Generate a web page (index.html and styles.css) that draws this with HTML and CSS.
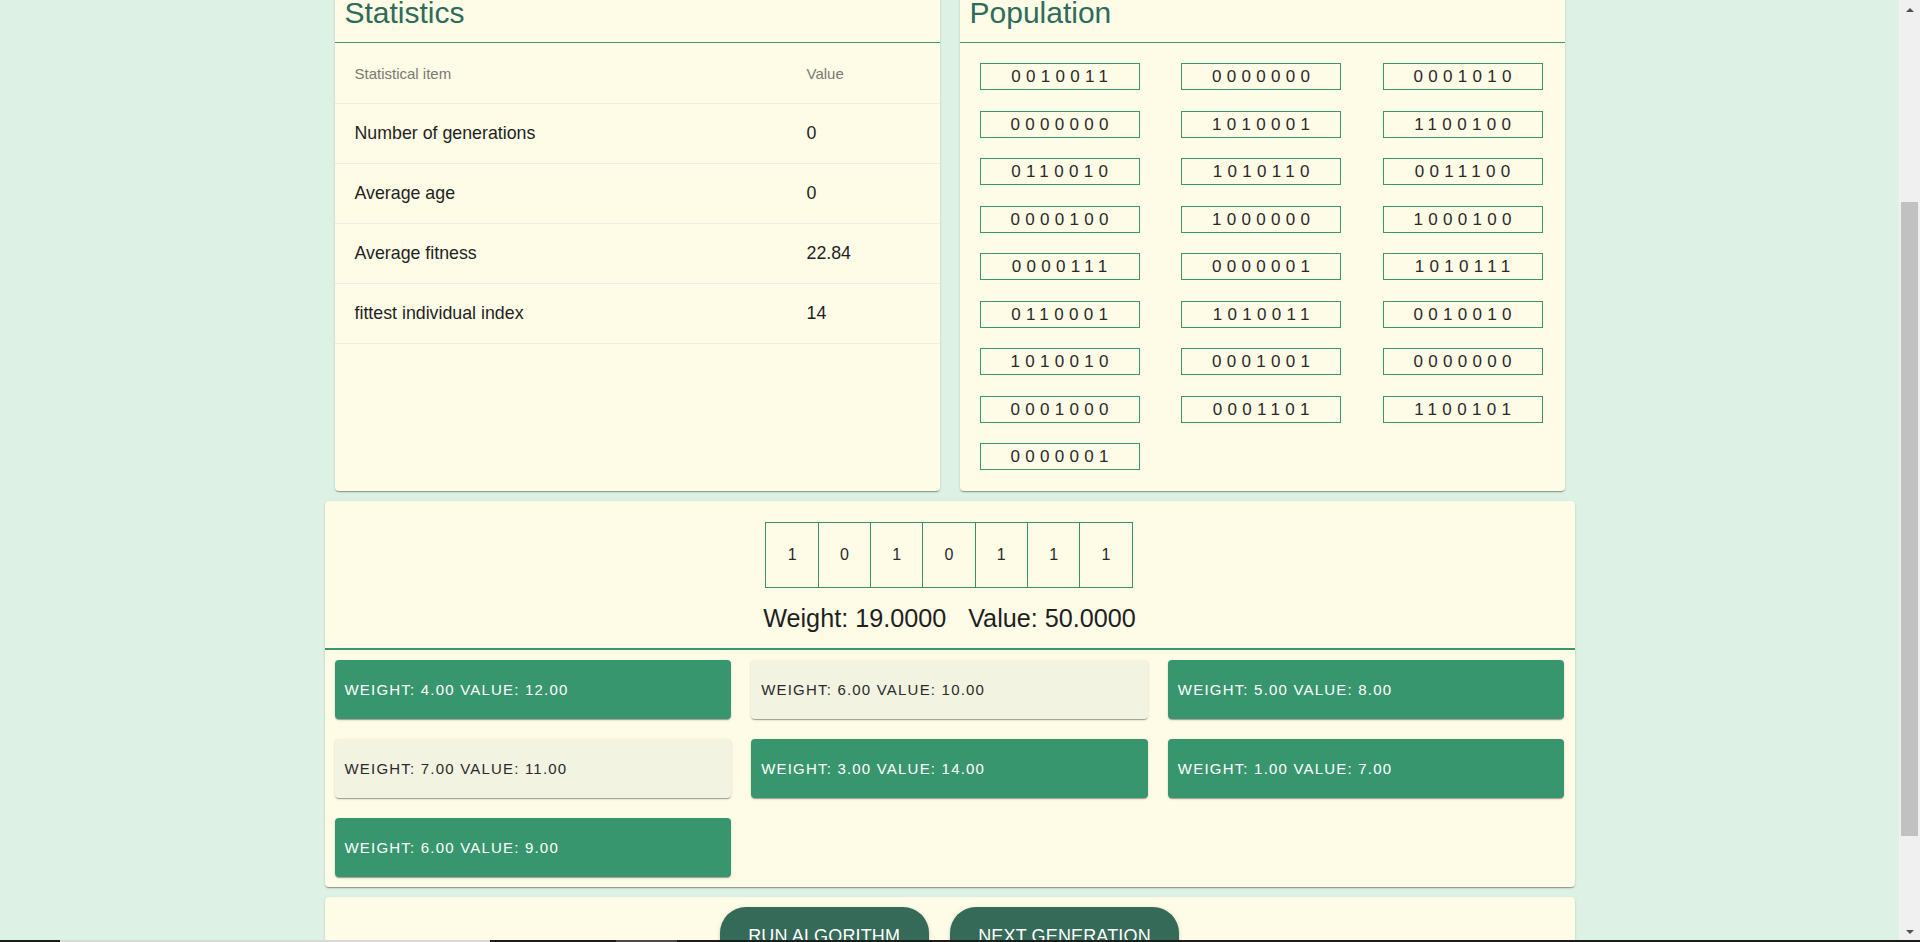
FILE: index.html
```html
<!DOCTYPE html>
<html lang="en">
<head>
<meta charset="utf-8">
<title>Knapsack Genetic Algorithm</title>
<link rel="stylesheet" href="styles.css">
</head>
<body>
<div class="window">
  <div class="viewport">
    <div class="container">
      <div class="top-row">
        <section class="card">
          <header class="card-header"><h2 class="card-title">Statistics</h2></header>
          <div class="stats-table">
            <div class="stats-row stats-head"><span class="col-item">Statistical item</span><span class="col-value">Value</span></div>
            <div class="stats-row"><span class="col-item">Number of generations</span><span class="col-value">0</span></div>
            <div class="stats-row"><span class="col-item">Average age</span><span class="col-value">0</span></div>
            <div class="stats-row"><span class="col-item">Average fitness</span><span class="col-value">22.84</span></div>
            <div class="stats-row"><span class="col-item">fittest individual index</span><span class="col-value">14</span></div>
          </div>
        </section>
        <section class="card">
          <header class="card-header"><h2 class="card-title">Population</h2></header>
          <div class="population">
            <div class="chromo">0010011</div>
            <div class="chromo">0000000</div>
            <div class="chromo">0001010</div>
            <div class="chromo">0000000</div>
            <div class="chromo">1010001</div>
            <div class="chromo">1100100</div>
            <div class="chromo">0110010</div>
            <div class="chromo">1010110</div>
            <div class="chromo">0011100</div>
            <div class="chromo">0000100</div>
            <div class="chromo">1000000</div>
            <div class="chromo">1000100</div>
            <div class="chromo">0000111</div>
            <div class="chromo">0000001</div>
            <div class="chromo">1010111</div>
            <div class="chromo">0110001</div>
            <div class="chromo">1010011</div>
            <div class="chromo">0010010</div>
            <div class="chromo">1010010</div>
            <div class="chromo">0001001</div>
            <div class="chromo">0000000</div>
            <div class="chromo">0001000</div>
            <div class="chromo">0001101</div>
            <div class="chromo">1100101</div>
            <div class="chromo">0000001</div>
          </div>
        </section>
      </div>

      <section class="card wide">
        <div class="fittest">
          <div class="bits">
            <div class="bit">1</div>
            <div class="bit">0</div>
            <div class="bit">1</div>
            <div class="bit">0</div>
            <div class="bit">1</div>
            <div class="bit">1</div>
            <div class="bit">1</div>
          </div>
          <div class="summary"><span class="sum-item">Weight: 19.0000</span><span class="sum-item">Value: 50.0000</span></div>
        </div>
        <div class="items">
          <div class="item on">Weight: 4.00 Value: 12.00</div>
          <div class="item">Weight: 6.00 Value: 10.00</div>
          <div class="item on">Weight: 5.00 Value: 8.00</div>
          <div class="item">Weight: 7.00 Value: 11.00</div>
          <div class="item on">Weight: 3.00 Value: 14.00</div>
          <div class="item on">Weight: 1.00 Value: 7.00</div>
          <div class="item on">Weight: 6.00 Value: 9.00</div>
        </div>
      </section>

      <section class="card wide actions">
        <button class="btn">Run algorithm</button>
        <button class="btn">Next generation</button>
      </section>
    </div>
  </div>
  <div class="scrollbar">
    <div class="sb-btn"><span class="arrow-up"></span></div>
    <div class="sb-track"><div class="sb-thumb"></div></div>
    <div class="sb-btn"><span class="arrow-down"></span></div>
  </div>
</div>
<div class="taskbar">
  <span class="tb-dark tb-a"></span><span class="tb-light"></span><span class="tb-dark tb-b"></span><span class="tb-grey"></span><span class="tb-dark tb-rest"></span>
</div>
</body>
</html>
```
FILE: styles.css
```css
* { box-sizing: border-box; }
html, body { margin: 0; padding: 0; height: 100%; }
body {
  background: #ddf1e4;
  font-family: "Liberation Sans", Arial, sans-serif;
  color: #222;
  overflow: hidden;
}
.window { display: flex; height: 942px; }
.viewport { flex: 1; overflow: hidden; }

.container {
  width: 1250px;
  margin: -25px auto 0;
}
.top-row {
  display: flex;
  gap: 20px;
  padding: 10px;
  align-items: stretch;
}
.top-row .card { flex: 1; }

.card {
  background: #fefbe6;
  border-radius: 4px;
  box-shadow: 0 2px 1px -1px rgba(0,0,0,.2), 0 1px 1px 0 rgba(0,0,0,.14), 0 1px 3px 0 rgba(0,0,0,.12);
}
.card-header {
  padding: 10px 10px 11px;
  border-bottom: 1px solid #3a9670;
}
.card-title {
  margin: 0;
  font-weight: 400;
  font-size: 30px;
  line-height: 36px;
  color: #2f6b5b;
}

.stats-table { padding-top: 1px; }
.stats-row {
  display: flex;
  align-items: center;
  height: 60px;
  padding: 0 20px;
  border-bottom: 1px solid #ebeee2;
  font-size: 17.8px;
  color: #1f1f1f;
}
.stats-head { font-size: 15px; color: #7a7a72; }
.col-item { width: 452px; }

.population {
  display: grid;
  grid-template-columns: repeat(3, 160px);
  column-gap: 41.5px;
  row-gap: 20.5px;
  padding: 20px 20px 21px;
}
.chromo {
  height: 27px;
  border: 1px solid #3a9670;
  font-size: 17px;
  line-height: 25px;
  letter-spacing: 5.3px;
  padding-left: 5.3px;
  text-align: center;
  color: #2a2a2a;
}

.wide { margin: 0; }
.fittest {
  padding: 21px 0 16px;
  border-bottom: 2px solid #3a9670;
}
.bits {
  display: flex;
  justify-content: center;
}
.bit {
  width: 53.3px;
  height: 66px;
  border: 1px solid #3a8f6c;
  margin-left: -1px;
  display: flex;
  align-items: center;
  justify-content: center;
  font-size: 16px;
  color: #2a2a2a;
}
.summary {
  margin-top: 16px;
  text-align: center;
  font-size: 25.2px;
  line-height: 1.13;
  color: #1f1f1f;
}
.sum-item { margin: 0 11px; }

.items {
  display: grid;
  grid-template-columns: repeat(3, 1fr);
  gap: 20px;
  padding: 10px;
}
.item {
  height: 59px;
  display: flex;
  align-items: center;
  padding: 0 10px;
  border-radius: 4px;
  background: #f2f4e1;
  color: #2a2a2a;
  font-size: 15px;
  letter-spacing: 1.2px;
  text-transform: uppercase;
  box-shadow: 0 2px 1px -1px rgba(0,0,0,.2), 0 1px 1px 0 rgba(0,0,0,.14), 0 1px 3px 0 rgba(0,0,0,.12);
}
.item.on { background: #38966f; color: #fff; }

.actions {
  margin-top: 10px;
  padding: 10px;
  display: flex;
  justify-content: center;
  gap: 21px;
  height: 120px;
}
.btn {
  height: 59px;
  padding: 0 28.5px;
  border: 0;
  border-radius: 26px;
  background: #356958;
  color: #fff;
  font-family: "Liberation Sans", Arial, sans-serif;
  font-size: 18px;
  letter-spacing: 0.15px;
  text-transform: uppercase;
  box-shadow: 0 3px 1px -2px rgba(0,0,0,.2), 0 2px 2px 0 rgba(0,0,0,.14), 0 1px 5px 0 rgba(0,0,0,.12);
}

.scrollbar {
  width: 21px;
  background: #f0f0f0;
  display: flex;
  flex-direction: column;
}
.sb-btn {
  height: 20px;
  display: flex;
  align-items: center;
  justify-content: center;
}
.arrow-up {
  width: 0; height: 0;
  border-left: 4px solid transparent;
  border-right: 4px solid transparent;
  border-bottom: 4px solid #505050;
}
.arrow-down {
  width: 0; height: 0;
  border-left: 4px solid transparent;
  border-right: 4px solid transparent;
  border-top: 4px solid #505050;
}
.sb-track { flex: 1; padding: 182px 2px 0; }
.sb-thumb { height: 634px; background: #c1c1c1; }

.taskbar {
  position: fixed;
  left: 0; right: 0; bottom: 0;
  height: 2px;
  display: flex;
}
.tb-dark { background: #1c1c1c; }
.tb-a { width: 60px; }
.tb-light { width: 430px; background: #d8d8d8; }
.tb-b { width: 126px; }
.tb-grey { width: 61px; background: #4a4a4a; }
.tb-rest { flex: 1; }
```
